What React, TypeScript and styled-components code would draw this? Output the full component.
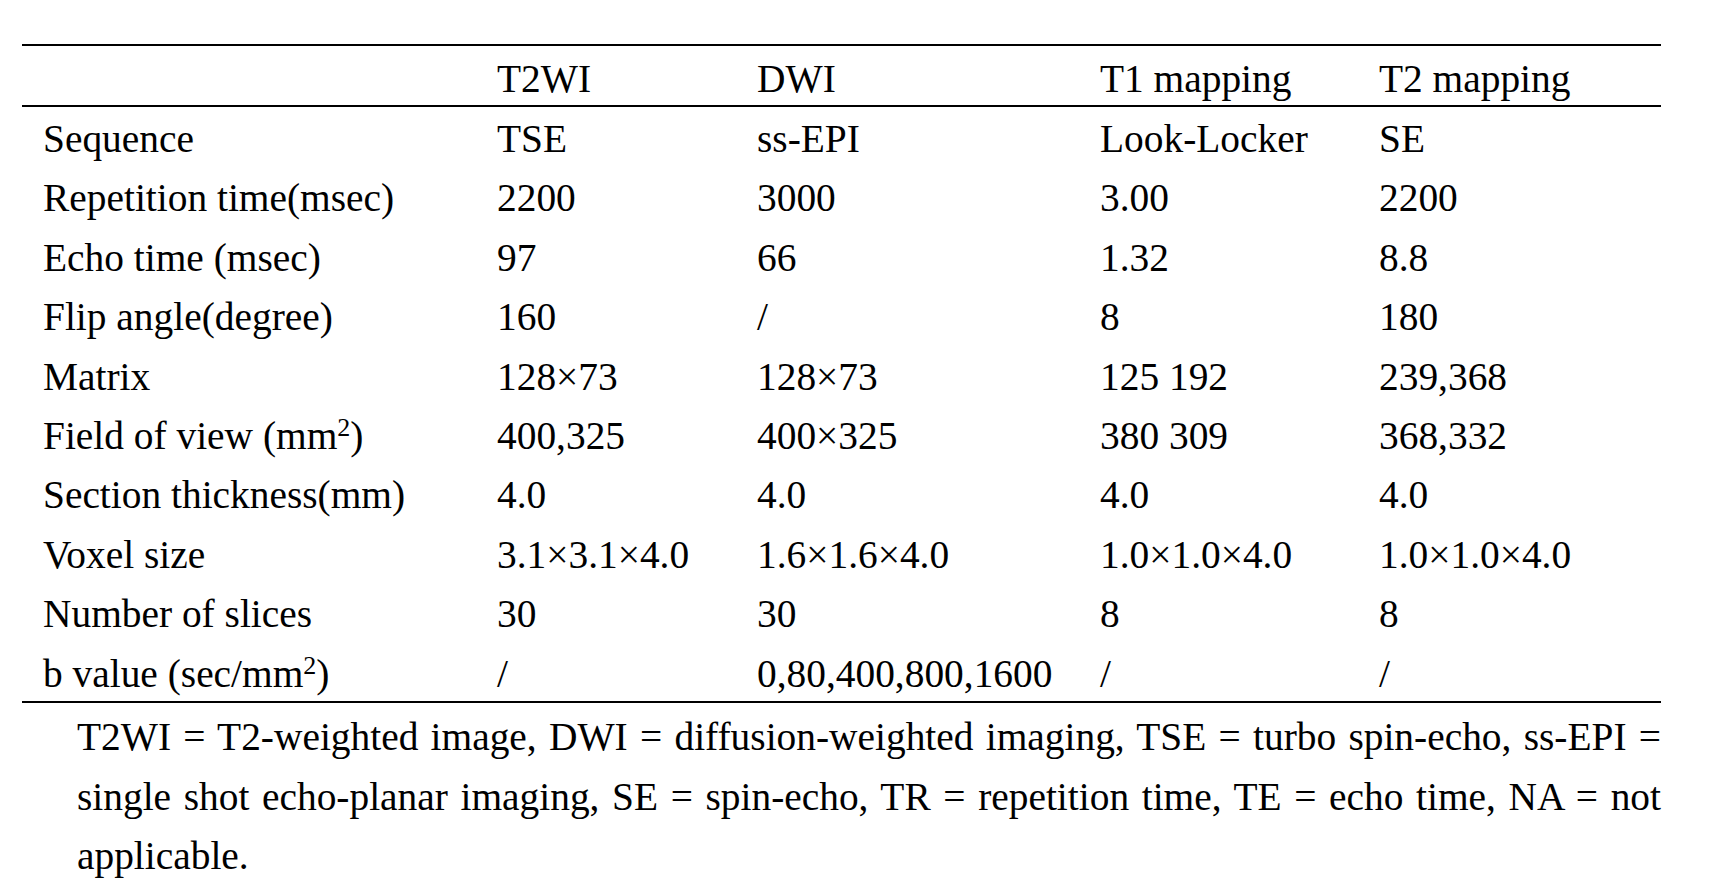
import React from "react";
import styled, { createGlobalStyle } from "styled-components";

const GlobalStyle = createGlobalStyle`
  html, body {
    margin: 0;
    padding: 0;
    background: #ffffff;
  }
  body {
    font-family: "Liberation Serif", "Times New Roman", serif;
    color: #000000;
  }
`;

const Page = styled.div`
  padding: 44px 0 0 22px;
  font-family: "Liberation Serif", "Times New Roman", serif;
  font-size: 39.4px;
  color: #000;
`;

const Table = styled.div`
  width: 1639px;
  border-top: 2px solid #000;
  border-bottom: 2px solid #000;
`;

const COLS = "454px 260px 343px 279px 303px";

const HeaderRow = styled.div`
  display: grid;
  grid-template-columns: ${COLS};
  padding-top: 7px;
  line-height: 52px;
  border-bottom: 2px solid #000;
`;

const BodyRow = styled.div`
  display: grid;
  grid-template-columns: ${COLS};
  padding-top: 6px;
  line-height: 53.4px;
`;

const Cell = styled.div`
  padding-left: 21px;
  white-space: nowrap;
`;

const Sup = styled.sup`
  font-size: 26px;
  line-height: 0;
  vertical-align: 0.5em;
`;

const Footnote = styled.div`
  width: 1584px;
  padding-left: 55px;
  margin-top: 5px;
  line-height: 59.5px;
`;

const FootLine = styled.div<{ $justify?: boolean }>`
  text-align: ${(p) => (p.$justify ? "justify" : "left")};
  text-align-last: ${(p) => (p.$justify ? "justify" : "left")};
  white-space: nowrap;
`;

const mm2 = (prefix: string) => (
  <>
    {prefix}
    <Sup>2</Sup>)
  </>
);

const header = ["", "T2WI", "DWI", "T1 mapping", "T2 mapping"];

const rows: React.ReactNode[][] = [
  ["Sequence", "TSE", "ss-EPI", "Look-Locker", "SE"],
  ["Repetition time(msec)", "2200", "3000", "3.00", "2200"],
  ["Echo time (msec)", "97", "66", "1.32", "8.8"],
  ["Flip angle(degree)", "160", "/", "8", "180"],
  ["Matrix", "128×73", "128×73", "125 192", "239,368"],
  [mm2("Field of view (mm"), "400,325", "400×325", "380 309", "368,332"],
  ["Section thickness(mm)", "4.0", "4.0", "4.0", "4.0"],
  ["Voxel size", "3.1×3.1×4.0", "1.6×1.6×4.0", "1.0×1.0×4.0", "1.0×1.0×4.0"],
  ["Number of slices", "30", "30", "8", "8"],
  [mm2("b value (sec/mm"), "/", "0,80,400,800,1600", "/", "/"],
];

export default function App() {
  return (
    <>
      <GlobalStyle />
      <Page>
        <Table>
          <HeaderRow>
            {header.map((h, i) => (
              <Cell key={i}>{h}</Cell>
            ))}
          </HeaderRow>
          {rows.map((r, ri) => (
            <BodyRow key={ri}>
              {r.map((c, ci) => (
                <Cell key={ci}>{c}</Cell>
              ))}
            </BodyRow>
          ))}
        </Table>
        <Footnote>
          <FootLine $justify>
            T2WI = T2-weighted image, DWI = diffusion-weighted imaging, TSE = turbo spin-echo, ss-EPI =
          </FootLine>
          <FootLine $justify>
            single shot echo-planar imaging, SE = spin-echo, TR = repetition time, TE = echo time, NA = not
          </FootLine>
          <FootLine>applicable.</FootLine>
        </Footnote>
      </Page>
    </>
  );
}
